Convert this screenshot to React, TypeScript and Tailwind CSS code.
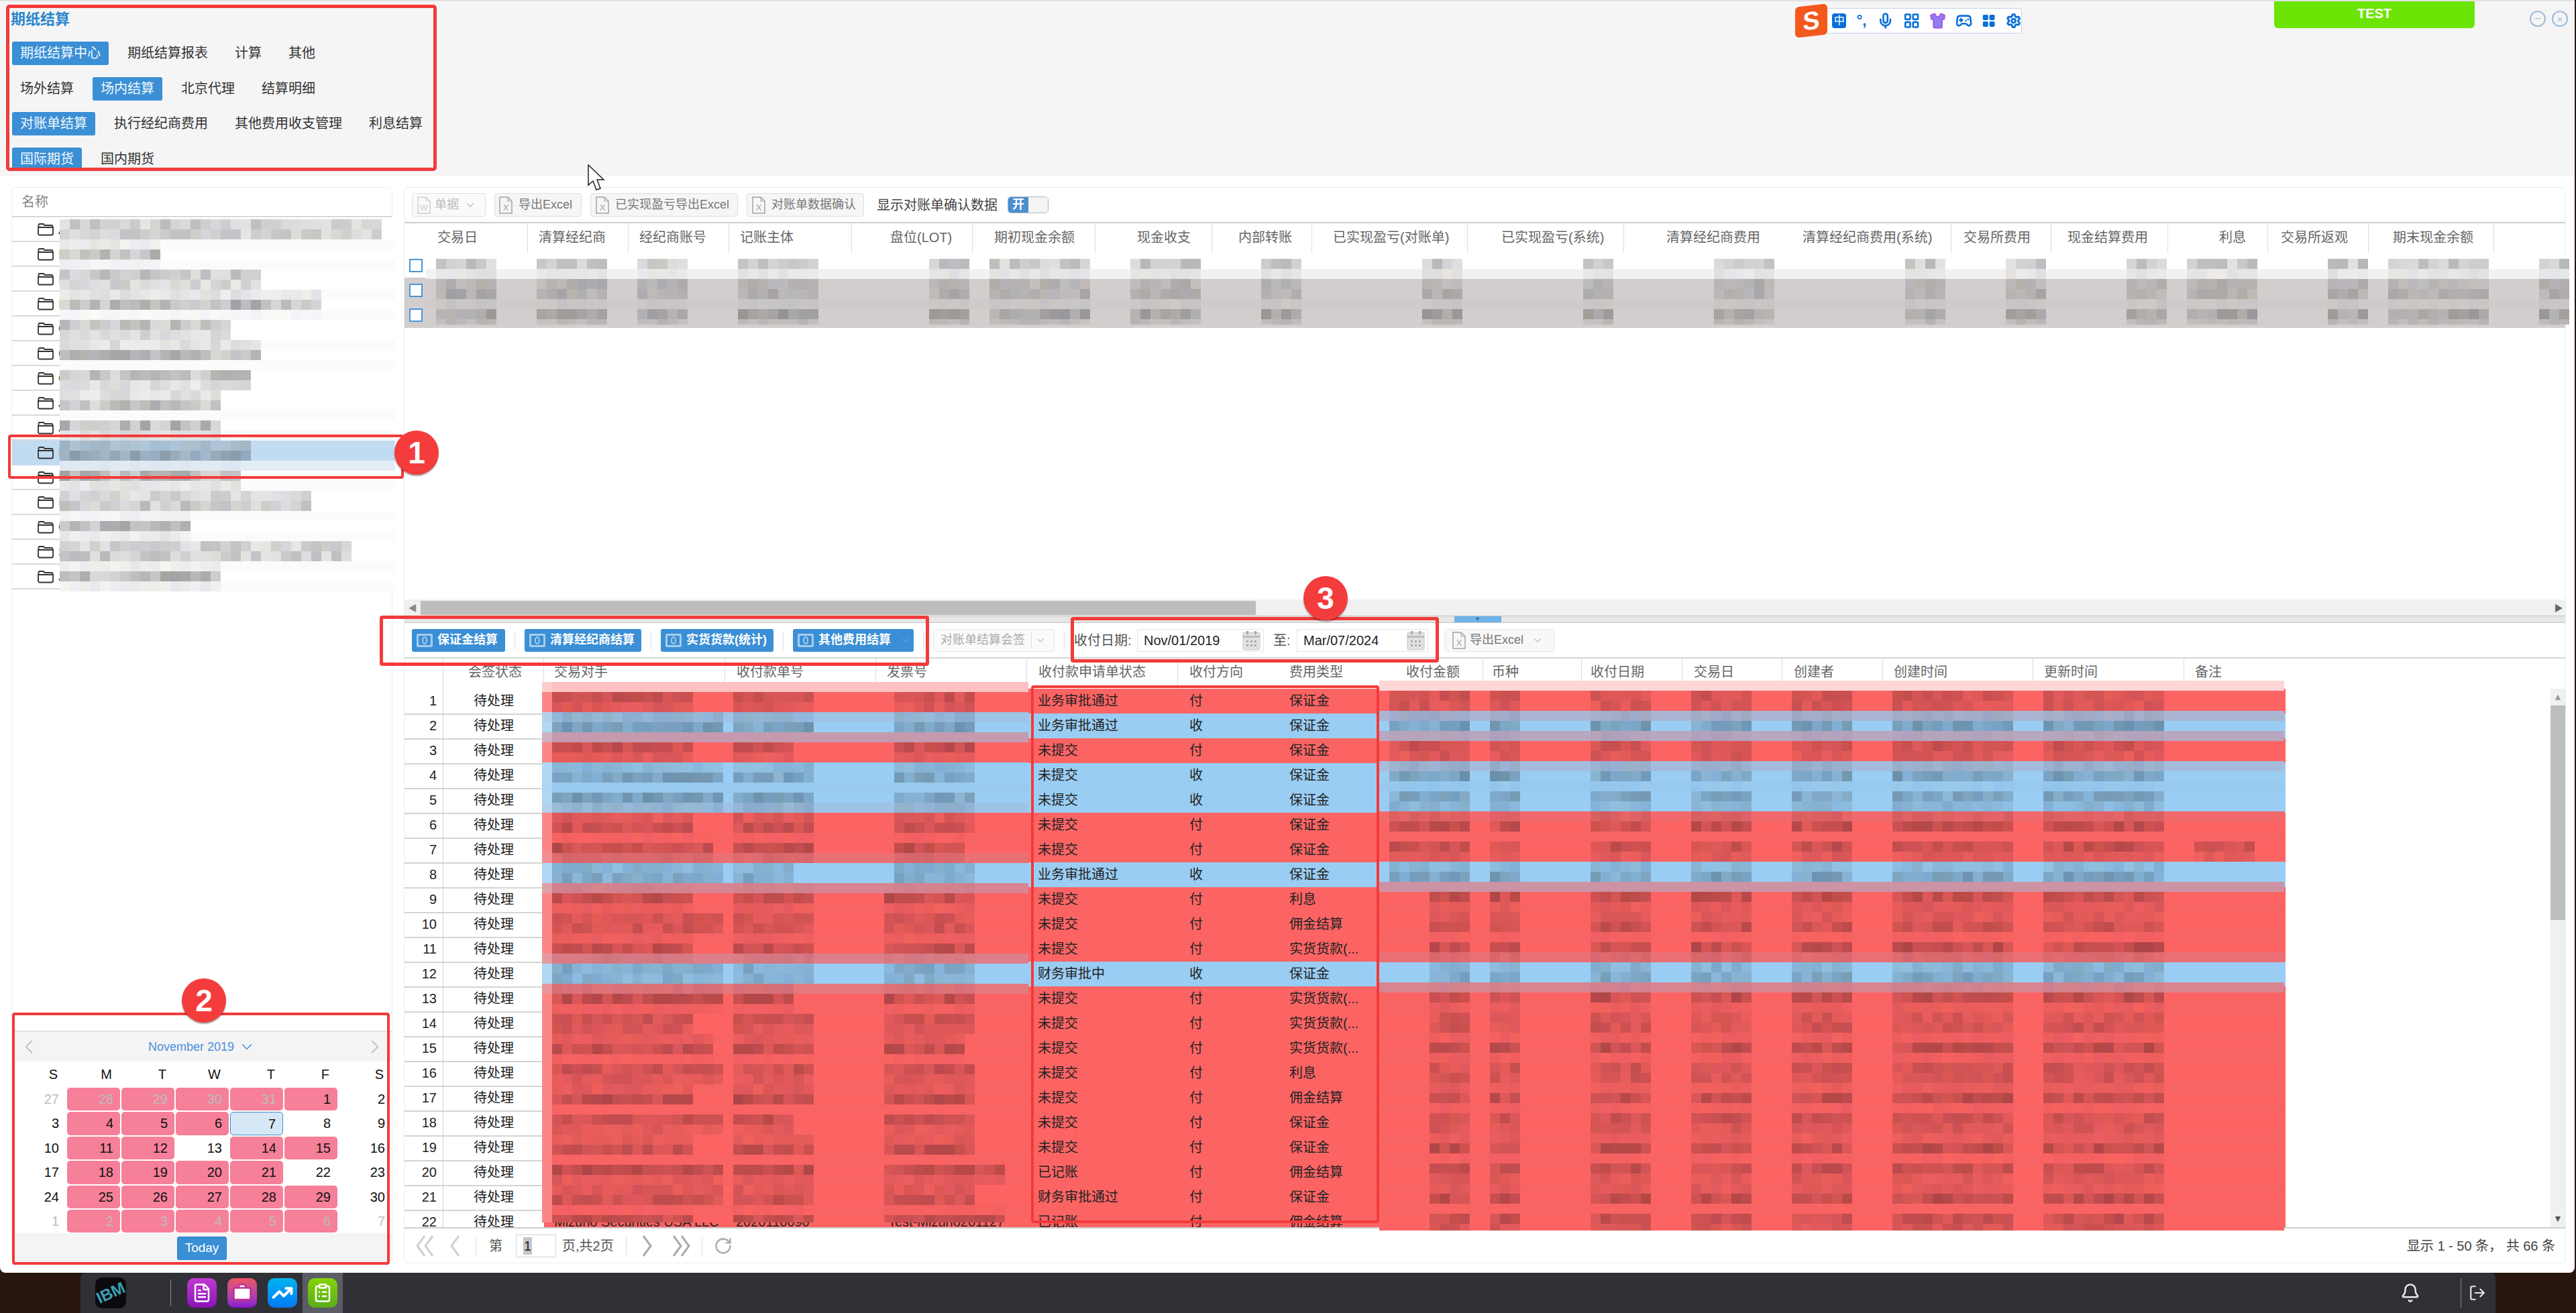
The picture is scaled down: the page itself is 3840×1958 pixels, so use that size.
import { Bell, Briefcase, ChevronDown, ChevronLeft, ChevronRight, ClipboardList, FileText, Gamepad2, LayoutGrid, LogOut, Mic, RotateCw, Settings, Shirt, TrendingUp } from 'lucide-react';

type RGB = [number, number, number];
type MosaicRow = { top: number; bottom: number; color: RGB; blocks: [number, number][] };
type Cell = { x: number; y: number; w: number; h: number; c: string };

const RED: RGB = [252, 100, 100];
const BLUE: RGB = [154, 205, 243];
const GREY: RGB = [210, 206, 206];
const WHITE: RGB = [255, 255, 255];
const SELECTED: RGB = [193, 219, 241];

let seed = 20191107;
function rnd() {
  seed = (seed * 16807) % 2147483647;
  return seed / 2147483647;
}

function css(c: RGB) {
  return `rgb(${Math.round(c[0])},${Math.round(c[1])},${Math.round(c[2])})`;
}

// the redacted text in the reference is a 15px mosaic, this rebuilds it from the row colours
function buildMosaic(rows: MosaicRow[], xStart: number, xEnd: number, yStart: number, yEnd: number, pad: number, k: number) {
  const cells: Cell[] = [];
  for (let y = yStart; y < yEnd; y += 15) {
    const h = Math.min(15, yEnd - y);
    const base: RGB = [0, 0, 0];
    let covered = 0;
    let best: MosaicRow | null = null;
    let bestCov = 0;
    let hasLine = false;
    for (const row of rows) {
      const overlap = Math.max(0, Math.min(y + h, row.bottom) - Math.max(y, row.top));
      covered += overlap;
      for (let i = 0; i < 3; i++) base[i] += row.color[i] * overlap;
      const zone = Math.max(0, Math.min(y + h, row.bottom - pad) - Math.max(y, row.top + pad));
      if (zone / h > bestCov) {
        bestCov = zone / h;
        best = row;
      }
      if (row.bottom > y && row.bottom < y + h) hasLine = true;
    }
    for (let i = 0; i < 3; i++) base[i] = (base[i] + 255 * (h - covered)) / h;
    if (hasLine) for (let i = 0; i < 3; i++) base[i] *= 0.985;
    cells.push({ x: xStart, y, w: xEnd - xStart, h, c: css(base) });
    if (!best) continue;
    for (const [x0, x1] of best.blocks) {
      for (let x = x0; x < x1; x += 15) {
        const f = 1 - k * bestCov * (0.4 + 0.6 * rnd());
        const n = (rnd() - 0.5) * 8;
        cells.push({ x, y, w: 15, h, c: css([base[0] * f + n, base[1] * f + n * 0.5, base[2] * f - n * 0.5]) });
      }
    }
  }
  return cells;
}

const treeEnds = [568, 238, 388, 478, 344, 388, 373, 329, 329, 373, 359, 463, 284, 524, 329];
const treeLetters = ['A', 'I', 'I', 'I', 'C', 'C', 'C', 'J', 'J', 'I', 'I', 'I', 'C', 'S', 'J'];

const treeRows: MosaicRow[] = treeEnds.map((end, i) => ({
  top: 323 + 37 * i,
  bottom: 360 + 37 * i,
  color: i === 9 ? SELECTED : WHITE,
  blocks: [[89, end]],
}));

const upperBlocks: [number, number][] = [
  [650, 740], [800, 905], [950, 1025], [1100, 1220], [1385, 1445], [1475, 1625], [1685, 1790], [1880, 1940],
  [2120, 2180], [2360, 2405], [2555, 2645], [2840, 2900], [2990, 3050], [3170, 3230], [3260, 3365], [3470, 3530],
  [3560, 3710], [3785, 3824],
];

const upperRows: MosaicRow[] = [
  { top: 376, bottom: 413, color: WHITE, blocks: upperBlocks },
  { top: 413, bottom: 451, color: GREY, blocks: upperBlocks },
  { top: 451, bottom: 488, color: GREY, blocks: upperBlocks },
];

const lowerData = [
  ['业务审批通过', '付', '保证金'],
  ['业务审批通过', '收', '保证金'],
  ['未提交', '付', '保证金'],
  ['未提交', '收', '保证金'],
  ['未提交', '收', '保证金'],
  ['未提交', '付', '保证金'],
  ['未提交', '付', '保证金'],
  ['业务审批通过', '收', '保证金'],
  ['未提交', '付', '利息'],
  ['未提交', '付', '佣金结算'],
  ['未提交', '付', '实货货款(...'],
  ['财务审批中', '收', '保证金'],
  ['未提交', '付', '实货货款(...'],
  ['未提交', '付', '实货货款(...'],
  ['未提交', '付', '实货货款(...'],
  ['未提交', '付', '利息'],
  ['未提交', '付', '佣金结算'],
  ['未提交', '付', '保证金'],
  ['未提交', '付', '保证金'],
  ['已记账', '付', '佣金结算'],
  ['财务审批通过', '付', '保证金'],
  ['已记账', '付', '佣金结算'],
];

const counterpartyEnds = [1033, 1078, 1033, 1078, 1078, 1033, 1063, 1078];
const invoiceEnds = [1453, 1453, 1453, 1453, 1453, 1453, 1438, 1453];

const lowerLeftRows: MosaicRow[] = lowerData.map((row, i) => ({
  top: 1026 + 37 * i,
  bottom: 1063 + 37 * i,
  color: row[1] === '收' ? BLUE : RED,
  blocks: [
    [823, counterpartyEnds[i % 8]],
    [1093, i % 5 === 2 ? 1183 : 1213],
    [i < 8 ? 1333 : 1318, i === 19 || i === 21 ? 1498 : invoiceEnds[i % 8]],
  ],
}));

const lowerRightRows: MosaicRow[] = lowerData.map((row, i) => {
  const blocks: [number, number][] = [
    [i < 8 ? 2071 : 2131, 2191], [2221, 2266], [2371, 2461], [2521, 2611], [2671, 2761], [2821, 3001], [3046, 3226],
  ];
  if (i === 6) blocks.push([3271, 3361]);
  return { top: 1026 + 37 * i, bottom: 1063 + 37 * i, color: row[1] === '收' ? BLUE : RED, blocks };
});

const mosaicCells: Cell[] = [
  ...buildMosaic(treeRows, 89, 589, 327, 882, 8, 0.36),
  ...buildMosaic(upperRows, 635, 3824, 386, 484, 8, 0.28),
  ...buildMosaic(lowerLeftRows, 808, 1533, 1017, 1823, 8, 0.3),
  { x: 808, y: 1017, w: 15, h: 806, c: 'rgba(255,255,255,0.22)' },
  ...buildMosaic(lowerRightRows, 2056, 3405, 1015, 1835, 8, 0.3),
];

const upperCols = [
  { label: '交易日', cls: 'pl-[15px] border-r border-[#dcdcdc]' },
  { label: '清算经纪商', cls: 'pl-[16px] border-r border-[#dcdcdc]' },
  { label: '经纪商账号', cls: 'pl-[16px] border-r border-[#dcdcdc]' },
  { label: '记账主体', cls: 'pl-[16px] border-r border-[#dcdcdc]' },
  { label: '盘位(LOT)', cls: 'pl-[57px] border-r border-[#dcdcdc]' },
  { label: '期初现金余额', cls: 'pl-[32px] border-r border-[#dcdcdc]' },
  { label: '现金收支', cls: 'pl-[62px] border-r border-[#dcdcdc]' },
  { label: '内部转账', cls: 'pl-[39px] border-r border-[#dcdcdc]' },
  { label: '已实现盈亏(对账单)', cls: 'pl-[31px] border-r border-[#dcdcdc]' },
  { label: '已实现盈亏(系统)', cls: 'pl-[50px] border-r border-[#dcdcdc]' },
  { label: '清算经纪商费用', cls: 'pl-[63px]' },
  { label: '清算经纪商费用(系统)', cls: 'pl-[22px] border-r border-[#dcdcdc]' },
  { label: '交易所费用', cls: 'pl-[18px] border-r border-[#dcdcdc]' },
  { label: '现金结算费用', cls: 'pl-[24px] border-r border-[#dcdcdc]' },
  { label: '利息', cls: 'pl-[76px] border-r border-[#dcdcdc]' },
  { label: '交易所返观', cls: 'pl-[19px] border-r border-[#dcdcdc]' },
  { label: '期末现金余额', cls: 'pl-[36px] border-r border-[#dcdcdc]' },
];

const upperGrid = 'grid grid-cols-[34px_150px_150px_150px_183px_180px_183px_174px_149px_232px_233px_244px_244px_149px_174px_149px_150px_187px]';
const lowerGrid = 'grid grid-cols-[58px_150px_270px_225px_225px_225px_150px_150px_155px_147px_150px_149px_150px_224px_225px_151px]';

const lowerCols = [
  { label: '', cls: 'border-r border-[#dcdcdc]' },
  { label: '会签状态', cls: 'pl-[37px] border-r border-[#dcdcdc]' },
  { label: '交易对手', cls: 'pl-[15px] border-r border-[#dcdcdc]' },
  { label: '收付款单号', cls: 'pl-[17px] border-r border-[#dcdcdc]' },
  { label: '发票号', cls: 'pl-[16px] border-r border-[#dcdcdc]' },
  { label: '收付款申请单状态', cls: 'pl-[17px] border-r border-[#dcdcdc]' },
  { label: '收付方向', cls: 'pl-[17px]' },
  { label: '费用类型', cls: 'pl-[16px]' },
  { label: '收付金额', cls: 'pl-[40px] border-r border-[#dcdcdc]' },
  { label: '币种', cls: 'pl-[13px] border-r border-[#dcdcdc]' },
  { label: '收付日期', cls: 'pl-[13px] border-r border-[#dcdcdc]' },
  { label: '交易日', cls: 'pl-[17px] border-r border-[#dcdcdc]' },
  { label: '创建者', cls: 'pl-[17px] border-r border-[#dcdcdc]' },
  { label: '创建时间', cls: 'pl-[16px] border-r border-[#dcdcdc]' },
  { label: '更新时间', cls: 'pl-[16px] border-r border-[#dcdcdc]' },
  { label: '备注', cls: 'pl-[16px]' },
];

const navRows = [
  [{ label: '期纸结算中心', active: true }, { label: '期纸结算报表' }, { label: '计算' }, { label: '其他' }],
  [{ label: '场外结算' }, { label: '场内结算', active: true }, { label: '北京代理' }, { label: '结算明细' }],
  [{ label: '对账单结算', active: true }, { label: '执行经纪商费用' }, { label: '其他费用收支管理' }, { label: '利息结算' }],
  [{ label: '国际期货', active: true }, { label: '国内期货' }],
];

const weekDays = ['S', 'M', 'T', 'W', 'T', 'F', 'S'];
const calendarDays = [
  { d: 27, muted: true }, { d: 28, muted: true, pink: true }, { d: 29, muted: true, pink: true }, { d: 30, muted: true, pink: true }, { d: 31, muted: true, pink: true }, { d: 1, pink: true }, { d: 2 },
  { d: 3 }, { d: 4, pink: true }, { d: 5, pink: true }, { d: 6, pink: true }, { d: 7, today: true }, { d: 8 }, { d: 9 },
  { d: 10 }, { d: 11, pink: true }, { d: 12, pink: true }, { d: 13 }, { d: 14, pink: true }, { d: 15, pink: true }, { d: 16 },
  { d: 17 }, { d: 18, pink: true }, { d: 19, pink: true }, { d: 20, pink: true }, { d: 21, pink: true }, { d: 22 }, { d: 23 },
  { d: 24 }, { d: 25, pink: true }, { d: 26, pink: true }, { d: 27, pink: true }, { d: 28, pink: true }, { d: 29, pink: true }, { d: 30 },
  { d: 1, muted: true }, { d: 2, muted: true, pink: true }, { d: 3, muted: true, pink: true }, { d: 4, muted: true, pink: true }, { d: 5, muted: true, pink: true }, { d: 6, muted: true, pink: true }, { d: 7, muted: true },
];

function FolderIcon() {
  return (
    <svg width="24" height="20" viewBox="0 0 24 20" fill="none" stroke="#333" strokeWidth="1.8" className="shrink-0">
      <path d="M1.5 7V3.5a1.5 1.5 0 0 1 1.5-1.5h6l1.5 2h10.5a1.5 1.5 0 0 1 1.5 1.5V7" />
      <path d="M1 7h22v9.5a2 2 0 0 1-2 2H3a2 2 0 0 1-2-2z" />
    </svg>
  );
}

function DocIcon({ letter, color }: { letter: string; color: string }) {
  return (
    <svg width="20" height="26" viewBox="0 0 20 26" fill="none" className="shrink-0">
      <path d="M1 1h12l6 6v18H1z" stroke={color} strokeWidth="1.5" />
      <path d="M13 1v6h6" stroke={color} strokeWidth="1.2" />
      <text x="10" y="21" textAnchor="middle" fontSize="13" fill={color} fontFamily="Liberation Sans, sans-serif">
        {letter}
      </text>
    </svg>
  );
}

function MoneyIcon() {
  return (
    <svg width="26" height="24" viewBox="0 0 26 24" className="shrink-0">
      <rect x="1" y="2" width="24" height="20" rx="2" fill="#a5cdee" />
      <rect x="4" y="5" width="18" height="14" rx="1" fill="#3a8fd5" />
      <ellipse cx="13" cy="12" rx="4" ry="6" fill="#a5cdee" />
      <ellipse cx="13" cy="12" rx="2" ry="4" fill="#3a8fd5" />
    </svg>
  );
}

function CalendarIcon() {
  return (
    <svg width="27" height="30" viewBox="0 0 27 30" className="shrink-0">
      <rect x="1" y="3" width="25" height="26" rx="2" fill="#e2e2e2" stroke="#c4c4c4" />
      <rect x="1" y="8" width="25" height="3" fill="#bcbcbc" />
      <rect x="6" y="1" width="3" height="5" fill="#a8a8a8" />
      <rect x="18" y="1" width="3" height="5" fill="#a8a8a8" />
      <path d="M6 15h3v3H6zM12 15h3v3h-3zM18 15h3v3h-3zM6 21h3v3H6zM12 21h3v3h-3zM18 21h3v3h-3z" fill="#aaa" />
    </svg>
  );
}

function PagerArrow({ dir, double, color }: { dir: 'left' | 'right'; double?: boolean; color: string }) {
  const a = dir === 'left' ? 'M14 2L3 17l11 15' : 'M3 2l11 15L3 32';
  const b = dir === 'left' ? 'M26 2L15 17l11 15' : 'M15 2l11 15-11 15';
  return (
    <svg width={double ? 28 : 17} height="34" viewBox={double ? '0 0 28 34' : '0 0 17 34'} fill="none" stroke={color} strokeWidth="3">
      <path d={a} />
      {double && <path d={b} />}
    </svg>
  );
}

function ToolButton({ label, icon, chevron, muted, className }: { label: string; icon: string; chevron?: boolean; muted?: boolean; className: string }) {
  return (
    <div className={`flex items-center h-[35px] rounded-[4px] border border-[#dedede] bg-[#f6f6f6] text-[18px] whitespace-nowrap ${muted ? 'text-[#bbb] bg-[#fafafa]' : 'text-[#777]'} ${className}`}>
      <DocIcon letter={icon} color={muted ? '#cfcfcf' : '#a3a3a3'} />
      <span className={muted ? 'ml-[6px]' : 'ml-[9px]'}>{label}</span>
      {chevron && <ChevronDown size={18} className="ml-[8px] text-[#c4c4c4]" />}
    </div>
  );
}

function BlueButton({ label, className, chevron }: { label: string; className: string; chevron?: boolean }) {
  return (
    <div className={`flex items-center h-[34px] pl-[6px] rounded-[3px] bg-[#3a8fd5] text-white font-bold text-[18px] whitespace-nowrap shrink-0 ${className}`}>
      <MoneyIcon />
      <span className="ml-[6px]">{label}</span>
      {chevron && <ChevronDown size={16} className="ml-[14px] text-[#5da6e0]" />}
    </div>
  );
}

function Sep() {
  return <div className="w-px h-[28px] bg-[#dfdfdf] shrink-0" />;
}

function Badge({ n, className }: { n: number; className: string }) {
  return (
    <div className={`absolute flex items-center justify-center w-[66px] h-[66px] rounded-full bg-[#f43c3c] text-white font-bold text-[46px] leading-none shadow-[0_2px_2px_rgba(0,0,0,0.35)] ${className}`}>
      {n}
    </div>
  );
}

function SogouBar() {
  return (
    <div className="absolute left-[2676px] top-[8px] flex items-center h-[46px]">
      <div className="flex items-center justify-center w-[48px] h-[46px] rounded-[6px] bg-[#f4581c] -skew-y-6 z-10 text-white font-bold text-[38px] leading-none">S</div>
      <div className="flex items-center gap-[14px] h-[38px] w-[292px] -ml-[2px] pl-[8px] rounded-r-[3px] bg-white border border-[#c5d5e8] text-[#0a6fd6]">
        <div className="w-[22px] h-[22px] rounded-[4px] bg-[#0a6fd6] text-white text-[16px] leading-[22px] text-center">中</div>
        <div className="w-[18px] text-[22px] font-bold leading-none text-center">°,</div>
        <Mic size={26} strokeWidth={2.5} />
        <LayoutGrid size={26} strokeWidth={2.5} />
        <Shirt size={26} className="text-[#a45ce0]" fill="#8f7cf0" />
        <Gamepad2 size={26} strokeWidth={2.5} />
        <LayoutGrid size={22} fill="#0a6fd6" />
        <Settings size={24} strokeWidth={3} />
      </div>
    </div>
  );
}

function AppIcon({ className, children }: { className: string; children: React.ReactNode }) {
  return <div className={`flex items-center justify-center w-[44px] h-[44px] rounded-[10px] text-white ${className}`}>{children}</div>;
}

export default function App() {
  return (
    <div className="relative w-[3840px] h-[1958px] overflow-hidden flex flex-col bg-[#2a1610] font-[family-name:Liberation_Sans,Noto_Sans_CJK_SC,sans-serif] text-[#333]">
      <header className="flex h-[263px] w-[3838px] bg-[#f5f5f5] border-t-2 border-[#e2e2e2] shrink-0">
        <nav className="h-[252px] overflow-hidden pl-[16px] pt-[13px]">
          <div className="text-[22px] leading-[28px] font-bold text-[#2a85cc]">期纸结算</div>
          <div className="flex flex-col gap-[17.5px] pl-[2px] mt-[19px]">
            {navRows.map((row, i) => (
              <div key={i} className="flex gap-4">
                {row.map((item) => (
                  <div
                    key={item.label}
                    className={`h-[35px] px-3 rounded-[3px] text-[20px] leading-[35px] whitespace-nowrap ${item.active ? 'bg-[#3a8fd5] text-[#f2f8fd]' : 'text-[#333]'}`}
                  >
                    {item.label}
                  </div>
                ))}
              </div>
            ))}
          </div>
        </nav>
        <div className="flex-1" />
        <div className="w-[299px] h-[40px] rounded-b-[6px] bg-[#6ce506] text-white font-bold text-[20px] leading-[36px] text-center">TEST</div>
        <div className="flex w-[149px] gap-[9px] pl-[82px] pt-[14px]">
          <div className="flex items-center justify-center w-[24px] h-[24px] rounded-full border-2 border-[#9dbbd8] text-[#9dbbd8] text-[16px] leading-none">−</div>
          <div className="flex items-center justify-center w-[24px] h-[24px] rounded-full border-2 border-[#9dbbd8] text-[#9dbbd8] text-[15px] leading-none">×</div>
        </div>
      </header>

      <main className="flex gap-[17px] h-[1635px] w-[3838px] shrink-0 pl-[17px] pt-[16px] pb-[14px] bg-white rounded-b-[8px]">
        <section className="flex flex-col w-[568px] border border-[#eeeeee] rounded-[6px]">
          <div className="h-[44px] shrink-0 pl-[14px] text-[20px] leading-[42px] text-[#888] border-b-2 border-[#d8d8d8]">名称</div>
          {treeLetters.map((letter, i) => (
            <div key={i} className={`flex items-center h-[37px] shrink-0 pl-[38px] border-b-2 ${i === 9 ? 'bg-[#c1dbf1] border-[#c1dbf1]' : 'border-[#dadada]'}`}>
              <FolderIcon />
              <span className="ml-[7px] text-[20px]">{letter}</span>
            </div>
          ))}
          <div className="flex-1" />
          <div className="flex flex-col h-[346px] shrink-0 border-t-2 border-[#e2e2e2]">
            <div className="flex items-center justify-between h-[44px] px-[8px] bg-[#f4f4f4] shrink-0">
              <ChevronLeft size={34} strokeWidth={1.5} className="text-[#c4c4c4]" />
              <div className="flex items-center gap-[6px] text-[18px] text-[#4a90d9]">
                November 2019
                <ChevronDown size={26} strokeWidth={1.5} />
              </div>
              <ChevronRight size={34} strokeWidth={1.5} className="text-[#c4c4c4]" />
            </div>
            <div className="grid grid-cols-[repeat(7,81px)] h-[38px] shrink-0 text-[20px] leading-[38px] text-right text-[#111]">
              {weekDays.map((d, i) => (
                <div key={i} className="pr-[13px]">{d}</div>
              ))}
            </div>
            <div className="grid grid-cols-[repeat(7,81px)] auto-rows-[36.4px] shrink-0">
              {calendarDays.map((day, i) => (
                <div
                  key={i}
                  className={`mx-px my-px pr-[10px] rounded-[5px] text-right text-[20px] leading-[34px] ${day.pink ? 'bg-[#f67f99]' : ''} ${day.today ? 'bg-[#d6e8f6] border border-[#3f8fd0] leading-[32px]' : ''} ${day.muted ? 'text-[#bdbdbd]' : 'text-[#111]'}`}
                >
                  {day.d}
                </div>
              ))}
            </div>
            <div className="flex flex-1 items-center justify-center bg-[#f4f4f4]">
              <div className="flex items-center justify-center w-[74px] h-[35px] rounded-[3px] bg-[#3a8fd5] border border-[#2f7fc4] text-white text-[19px]">Today</div>
            </div>
          </div>
        </section>

        <section className="flex flex-col w-[3223px] border border-[#eeeeee] rounded-[6px] text-[20px]">
          <div className="flex items-center h-[53px] shrink-0 pl-[11px] border-b-2 border-[#cfcfcf]">
            <ToolButton label="单据" icon="W" chevron muted className="w-[110px] pl-[7px]" />
            <ToolButton label="导出Excel" icon="X" className="w-[130px] ml-[13px] pl-[6px]" />
            <ToolButton label="已实现盈亏导出Excel" icon="X" className="w-[220px] ml-[13px] pl-[7px]" />
            <ToolButton label="对账单数据确认" icon="X" className="w-[175px] ml-[13px] pl-[7px]" />
            <span className="ml-[19px] text-[#444] whitespace-nowrap">显示对账单确认数据</span>
            <div className="flex ml-[15px] w-[61px] h-[25px] rounded-[5px] border border-[#aab8c6] overflow-hidden">
              <div className="w-[30px] bg-[#4a8fcf] text-white font-bold text-[18px] leading-[23px] text-center">开</div>
              <div className="flex-1 bg-[#f4f4f4]" />
            </div>
          </div>
          <div className={`${upperGrid} h-[44px] shrink-0 text-[#666] leading-[42px] whitespace-nowrap`}>
            <div />
            {upperCols.map((col) => (
              <div key={col.label} className={col.cls}>{col.label}</div>
            ))}
          </div>
          <div className="h-[517px] shrink-0">
            {[0, 1, 2].map((i) => (
              <div key={i} className={`flex items-center h-[37.4px] pl-[7px] ${i > 0 ? 'bg-[#d2cece]' : ''}`}>
                <div className="w-[20px] h-[20px] bg-white border-2 border-[#4a96d8]" />
              </div>
            ))}
          </div>
          <div className="flex items-center h-[24px] shrink-0 bg-[#f0f0f0]">
            <div className="w-[24px] text-center text-[#888] text-[13px] leading-none">◀</div>
            <div className="w-[1245px] h-[21px] bg-[#bdbdbd]" />
            <div className="flex-1" />
            <div className="w-[20px] text-center text-[#666] text-[13px] leading-none">▶</div>
          </div>
          <div className="flex justify-center h-[11px] shrink-0 pr-[22px] bg-[#e6e6e6] border-y border-[#c4c4c4]">
            <div className="w-[70px] h-full bg-[#6fb4e8] text-[#2f6fa8] text-[9px] leading-[9px] text-center">▼</div>
          </div>
          <div className="flex items-center gap-[14px] h-[53px] shrink-0 pl-[11px] border-b-2 border-[#d6d6d6]">
            <BlueButton label="保证金结算" className="w-[139px]" />
            <Sep />
            <BlueButton label="清算经纪商结算" className="w-[174px]" />
            <Sep />
            <BlueButton label="实货货款(统计)" className="w-[168px]" />
            <Sep />
            <BlueButton label="其他费用结算" className="w-[180px]" chevron />
            <Sep />
            <div className="flex items-center w-[181px] h-[34px] shrink-0 pl-[10px] rounded-[3px] border border-[#e6e6e6] bg-[#fafafa] text-[18px] text-[#aaa] whitespace-nowrap">
              对账单结算会签
              <span className="ml-[9px] w-px h-[26px] bg-[#dfdfdf]" />
              <ChevronDown size={16} className="ml-[5px] text-[#c4c4c4]" />
            </div>
            <Sep />
            <span className="w-[80px] shrink-0 text-[#555] whitespace-nowrap">收付日期:</span>
            <div className="flex items-center justify-between w-[189px] h-[34px] shrink-0 pl-[9px] pr-[4px] border border-[#e4e4e4] text-[#222]">
              Nov/01/2019
              <CalendarIcon />
            </div>
            <span className="w-[21px] shrink-0 text-[#555]">至:</span>
            <div className="flex items-center justify-between w-[196px] h-[34px] shrink-0 pl-[9px] pr-[4px] border border-[#e4e4e4] text-[#222]">
              Mar/07/2024
              <CalendarIcon />
            </div>
            <div className="flex items-center w-[164px] h-[34px] ml-[10px] shrink-0 pl-[11px] rounded-[3px] border border-[#e6e6e6] bg-[#f8f8f8] text-[18px] text-[#777] whitespace-nowrap">
              <DocIcon letter="X" color="#a3a3a3" />
              <span className="ml-[6px]">导出Excel</span>
              <ChevronDown size={18} className="ml-[12px] text-[#c4c4c4]" />
            </div>
          </div>
          <div className={`${lowerGrid} h-[45px] shrink-0 text-[#666] leading-[40px] whitespace-nowrap`}>
            {lowerCols.map((col, i) => (
              <div key={i} className={col.cls}>{col.label}</div>
            ))}
          </div>
          <div className="flex h-[803px] shrink-0 overflow-hidden">
            <div className="flex-1 min-w-0">
              {lowerData.map((row, i) => {
                const bg = row[1] === '收' ? 'bg-[#9acdf3]' : 'bg-[#fc6464]';
                return (
                  <div key={i} className={`${lowerGrid} h-[37px] leading-[37px] text-[#222] whitespace-nowrap`}>
                    <div className="pr-[9px] text-right border-b-2 border-r border-[#d4d4d4]">{i + 1}</div>
                    <div className="text-center border-b-2 border-[#d4d4d4]">待处理</div>
                    <div className={`${bg} pl-[15px] border-b-2 border-white/50`}>{i === 21 ? 'Mizuno Securities USA LLC' : ''}</div>
                    <div className={`${bg} pl-[16px] border-b-2 border-white/50`}>{i === 21 ? '2020110090' : ''}</div>
                    <div className={`${bg} pl-[18px] border-b-2 border-white/50`}>{i === 21 ? 'Test-Mizuno201127' : ''}</div>
                    <div className={`${bg} pl-[16px] border-b-2 border-white/50`}>{row[0]}</div>
                    <div className={`${bg} pl-[17px] border-b-2 border-white/50`}>{row[1]}</div>
                    <div className={`${bg} pl-[16px] border-b-2 border-white/50`}>{row[2]}</div>
                    <div className={`${bg} col-span-8 border-b-2 border-white/50`} />
                  </div>
                );
              })}
            </div>
            <div className="flex flex-col w-[22px] shrink-0 bg-[#f0f0f0]">
              <div className="h-[25px] text-center text-[#999] text-[14px] leading-[25px]">▲</div>
              <div className="h-[320px] bg-[#bdbdbd]" />
              <div className="flex-1" />
              <div className="h-[25px] text-center text-[#555] text-[14px] leading-[25px]">▼</div>
            </div>
          </div>
          <div className="flex flex-1 items-center border-t-2 border-[#cfcfcf] pl-[16px] pr-[15px] text-[#555] whitespace-nowrap">
            <PagerArrow dir="left" double color="#d0d0d0" />
            <div className="ml-[23px]"><PagerArrow dir="left" color="#d0d0d0" /></div>
            <div className="ml-[22px] mr-[19px]"><Sep /></div>
            <span>第</span>
            <div className="flex items-center w-[60px] h-[34px] ml-[20px] mr-[9px] pl-[10px] border border-[#d4d4d4]">
              <span className="bg-[#c6c6c6] text-[#222] leading-[26px] px-px">1</span>
            </div>
            <span>页,共2页</span>
            <div className="ml-[18px] mr-[22px]"><Sep /></div>
            <PagerArrow dir="right" color="#aaa" />
            <div className="ml-[28px]"><PagerArrow dir="right" double color="#aaa" /></div>
            <div className="ml-[17px] mr-[17px]"><Sep /></div>
            <RotateCw size={28} className="text-[#aaa]" />
            <span className="ml-auto text-[#444]">显示 1 - 50 条， 共 66 条</span>
          </div>
        </section>
      </main>

      <footer className="flex items-center flex-1 mx-[120px] rounded-t-[8px] bg-[#303036] text-[#e8e8e8]">
        <div className="flex items-center justify-center w-[46px] h-[46px] ml-[22px] rounded-[10px] bg-[#0b0b0e] overflow-hidden">
          <span className="-rotate-[25deg] font-bold text-[24px] text-[#3aa0b4]">IBM</span>
        </div>
        <div className="w-px h-[40px] ml-[66px] bg-[#8a8a8e]" />
        <div className="flex items-center gap-[16px] ml-[24px]">
          <AppIcon className="bg-gradient-to-b from-[#c238d2] to-[#8a10b8]"><FileText size={30} /></AppIcon>
          <AppIcon className="bg-gradient-to-b from-[#ef5360] to-[#8a10d0]"><Briefcase size={30} fill="#fff" stroke="#c03090" /></AppIcon>
          <AppIcon className="bg-gradient-to-b from-[#05b4f0] to-[#0a78f0]"><TrendingUp size={32} strokeWidth={3} /></AppIcon>
          <div className="flex items-center justify-center w-[60px] h-[60px] -mx-[8px] bg-[#5c5c66]">
            <AppIcon className="bg-gradient-to-b from-[#86d406] to-[#58ac16]"><ClipboardList size={30} /></AppIcon>
          </div>
        </div>
        <Bell size={30} className="ml-auto" />
        <div className="w-px h-[44px] ml-[60px] bg-[#8a8a8e]" />
        <LogOut size={26} className="ml-[11px] mr-[14px]" />
      </footer>

      <SogouBar />

      {/* redacted text */}
      <svg className="absolute left-0 top-0 pointer-events-none" width="3840" height="1958" shapeRendering="crispEdges">
        {mosaicCells.map((cell, i) => (
          <rect key={i} x={cell.x} y={cell.y} width={cell.w} height={cell.h} fill={cell.c} />
        ))}
      </svg>

      {/* annotations drawn over the screenshot */}
      <div className="absolute left-[9px] top-[7px] w-[642px] h-[248px] rounded-[5px] border-[5px] border-[#f23b3b]" />
      <div className="absolute left-[12px] top-[648px] w-[590px] h-[66px] rounded-[4px] border-[4px] border-[#f23b3b]" />
      <div className="absolute left-[18px] top-[1510px] w-[563px] h-[376px] rounded-[4px] border-[4px] border-[#f23b3b]" />
      <div className="absolute left-[566px] top-[918px] w-[819px] h-[75px] rounded-[4px] border-[5px] border-[#f23b3b]" />
      <div className="absolute left-[1596px] top-[920px] w-[549px] h-[68px] rounded-[4px] border-[5px] border-[#f23b3b]" />
      <div className="absolute left-[1537px] top-[1022px] w-[519px] h-[802px] rounded-[4px] border-[4px] border-[#f23b3b]" />
      <Badge n={1} className="left-[588px] top-[642px]" />
      <Badge n={2} className="left-[271px] top-[1459px]" />
      <Badge n={3} className="left-[1943px] top-[859px]" />

      {/* mouse pointer */}
      <svg className="absolute left-[876px] top-[245px]" width="26" height="40" viewBox="0 0 26 40">
        <path d="M1 1v30l7-6 5 13 6-2-5-13h10z" fill="#fff" stroke="#222" strokeWidth="1.5" />
      </svg>
    </div>
  );
}
